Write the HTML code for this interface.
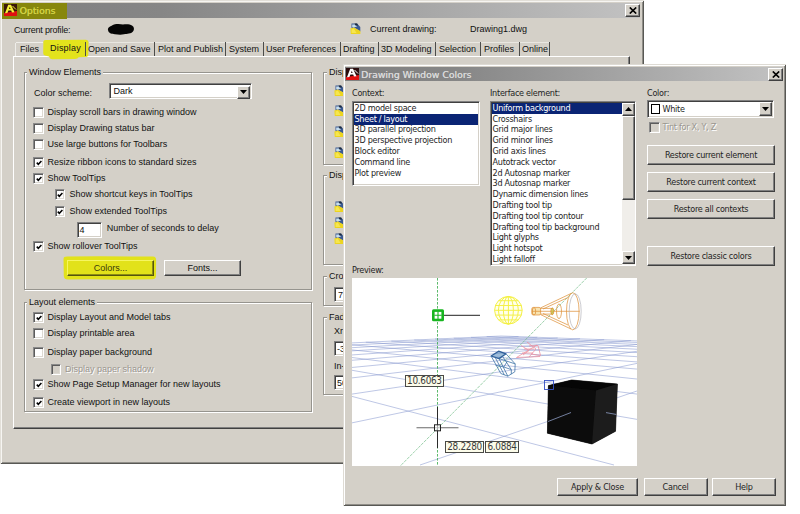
<!DOCTYPE html>
<html><head><meta charset="utf-8"><title>Options</title>
<style>
*{box-sizing:border-box;margin:0;padding:0}
html,body{width:800px;height:514px;background:#fff;overflow:hidden}
body{position:relative;font-family:"Liberation Sans",sans-serif;font-size:9px;color:#111;line-height:11px}
.a{position:absolute;white-space:nowrap}
.layer{position:absolute;left:0;top:0;width:800px;height:514px;overflow:hidden}
.win{position:absolute;background:#d4d0c8;box-shadow:inset 1px 1px 0 #dedbd4,inset -1px -1px 0 #585854,inset 2px 2px 0 #fff,inset -2px -2px 0 #908e88}
.tb{position:absolute;height:15px;background:linear-gradient(90deg,#808080 0%,#868686 25%,#c2c2c2 100%)}
.tt{position:absolute;font-family:"DejaVu Sans",sans-serif;font-weight:normal;font-size:9.3px;letter-spacing:0;color:#d8d8d8;text-shadow:0.2px 0 0 currentColor;white-space:nowrap;line-height:15px}
.xb{position:absolute;width:14px;height:12px;background:#d4d0c8;border:1px solid;border-color:#fff #404040 #404040 #fff;box-shadow:inset -1px -1px 0 #808080}
.grp{position:absolute;border:1px solid #96948e;box-shadow:1px 1px 0 #fff,inset 1px 1px 0 #fff}
.gl{position:absolute;background:#d4d0c8;padding:0 2px;white-space:nowrap}
.cb{position:absolute;width:10.5px;height:10.5px;background:#fff;border:1px solid;border-color:#8a8a8a #fff #fff #8a8a8a;box-shadow:inset 1px 1px 0 #5c5c5c,inset -1px -1px 0 #dcd9d2}
.cb.dis{background:#d4d0c8}
.btn{position:absolute;background:#d4d0c8;border:1px solid;border-color:#fff #404040 #404040 #fff;box-shadow:inset -1px -1px 0 #808080;text-align:center;white-space:nowrap}
.sunk{position:absolute;background:#fff;border:1px solid;border-color:#808080 #fff #fff #808080;box-shadow:inset 1px 1px 0 #404040,inset -1px -1px 0 #d4d0c8}
.t2{font-family:"DejaVu Sans Condensed","DejaVu Sans",sans-serif;font-size:9px;letter-spacing:-0.27px;color:#1e1e1e}
.li{position:absolute;height:11px;line-height:11px;padding-left:1px;white-space:nowrap}
.li.sel{background:#0a2474;color:#fff !important}
.tip{position:absolute;background:#fcfcea;border:1px solid #4a4a46;font-family:"DejaVu Sans Condensed","DejaVu Sans",sans-serif;font-size:9.9px;letter-spacing:-0.3px;line-height:10px;text-align:center;color:#3a3a3a;white-space:nowrap}
.dis{color:#9a968f;text-shadow:1px 1px 0 #fff}
</style></head><body>
<div class="layer" id="options">
<div class="win" style="left:0px;top:0px;width:644px;height:464px;box-shadow:inset 1px 1px 0 #e2dfd8,inset -1px -1px 0 #585854,inset 2px 2px 0 #f6f5f2,inset -2px -2px 0 #908e88"></div>
<div class="tb" style="left:2px;top:2.5px;width:638px;height:15px;"></div>
<div class="a" style="left:2px;top:2.5px;width:64.5px;height:16px;background:#87870d"></div>
<svg class="a" style="left:4px;top:4.3px" width="13" height="12" viewBox="0 0 13 12"><rect width="13" height="12" fill="#3a1808"/><path d="M0 9L13 7V12H0Z" fill="#e01010"/><path d="M1 9.2L4.2 0.8H7L10.5 8.2L8 8.6L7.2 6.6H4.4L3.4 9Z M5 5H6.6L5.8 2.8Z" fill="#f4f03a" fill-rule="evenodd"/><path d="M8.5 2L12 5.5" stroke="#f4f03a" stroke-width="1"/></svg>
<div class="tt" style="left:19.5px;top:2.8px;color:#d2d244">Options</div>
<div class="xb" style="left:625px;top:4px;width:14.5px;height:12.5px;"><svg class="a" style="left:2.5px;top:1.5px" width="8" height="7" viewBox="0 0 8 7"><path d="M0.8 0.5L7.2 6.5M7.2 0.5L0.8 6.5" stroke="#000" stroke-width="1.7"/></svg></div>
<div class="a" style="left:14px;top:24.5px;letter-spacing:-0.2px">Current profile:</div>
<svg class="a" style="left:106px;top:22px" width="30" height="14" viewBox="0 0 30 14"><path d="M2 8 C1.5 5.5,4 4.5,6 3.5 C9 1.6,14 2,17 2.5 C20 2,24 2,26 3.5 C28.5 5,28.3 8,27 9.5 C25 12,21 11.6,18 12.2 C15 13,12 12.6,9 12.2 C5 12,2.5 11,2 8Z" fill="#050505"/></svg>
<svg class="a" style="left:349.7px;top:22.6px" width="11" height="11.5" viewBox="0 0 11 11.5"><path d="M1.5 0.6H7L10.3 4V8.5L4 4.6L1.5 5.2Z" fill="#3c5a92"/><path d="M2.2 1.4H5.6L7 3.6L3.6 4.4L2.2 4.2Z" fill="#c6deee"/><path d="M4.6 0.6H7.2L8 2.4H5.4Z" fill="#1c2a3e"/><path d="M0.4 5.6L4 4.4L10.4 8V10.9H0.8Z" fill="#ecd420"/><path d="M1.5 6.5L3.8 5.6L6.5 10H1.6Z" fill="#f6e650"/></svg>
<div class="a" style="left:370px;top:24px;">Current drawing:</div>
<div class="a" style="left:470px;top:24px;">Drawing1.dwg</div>
<div class="a" style="left:13px;top:55.5px;width:617px;height:373.5px;border:1px solid;border-color:#fff #404040 #404040 #fff;box-shadow:inset -1px -1px 0 #808080"></div>
<svg class="a" style="left:40px;top:36px" width="52" height="26" viewBox="40 36 52 26"><path d="M43.4 41.2Q43.8 40 46 40L86 39.7Q88.6 39.9 88.5 42L88.3 55Q88.1 57 85 57.1L78.6 57.3Q78 59 75 59.1L52 59.3Q49.6 59.1 49 56.6L45 55.6Q43.2 55.1 43.2 53Z" fill="#e3e31c"/></svg>
<div class="a" style="left:15px;top:42.5px;width:1px;height:13px;background:#efeeea"></div>
<div class="a" style="left:16px;top:41.5px;width:27px;height:1px;background:#efeeea"></div>
<div class="a" style="left:88.5px;top:41.5px;width:460.5px;height:1px;background:#e9e7e1"></div>
<div class="a" style="left:20px;top:43.6px;">Files</div>
<div class="a" style="left:50px;top:43px;letter-spacing:0.2px">Display</div>
<div class="a" style="left:85px;top:42px;width:1px;height:13.5px;background:#4c4c4a"></div>
<div class="a" style="left:88px;top:43.6px;">Open and Save</div>
<div class="a" style="left:154px;top:42px;width:1px;height:13.5px;background:#4c4c4a"></div>
<div class="a" style="left:158px;top:43.6px;">Plot and Publish</div>
<div class="a" style="left:225px;top:42px;width:1px;height:13.5px;background:#4c4c4a"></div>
<div class="a" style="left:229px;top:43.6px;">System</div>
<div class="a" style="left:263px;top:42px;width:1px;height:13.5px;background:#4c4c4a"></div>
<div class="a" style="left:266px;top:43.6px;">User Preferences</div>
<div class="a" style="left:340px;top:42px;width:1px;height:13.5px;background:#4c4c4a"></div>
<div class="a" style="left:343px;top:43.6px;">Drafting</div>
<div class="a" style="left:378px;top:42px;width:1px;height:13.5px;background:#4c4c4a"></div>
<div class="a" style="left:381px;top:43.6px;">3D Modeling</div>
<div class="a" style="left:435px;top:42px;width:1px;height:13.5px;background:#4c4c4a"></div>
<div class="a" style="left:439px;top:43.6px;">Selection</div>
<div class="a" style="left:480px;top:42px;width:1px;height:13.5px;background:#4c4c4a"></div>
<div class="a" style="left:484px;top:43.6px;">Profiles</div>
<div class="a" style="left:519px;top:42px;width:1px;height:13.5px;background:#4c4c4a"></div>
<div class="a" style="left:522px;top:43.6px;">Online</div>
<div class="a" style="left:549px;top:42px;width:1px;height:13.5px;background:#4c4c4a"></div>
<div class="grp" style="left:24px;top:72px;width:288px;height:218px;"></div>
<div class="gl" style="left:27px;top:67px;">Window Elements</div>
<div class="a" style="left:34px;top:87.5px;">Color scheme:</div>
<div class="sunk" style="left:109px;top:83px;width:143px;height:16px;"><div class="a" style="left:3.5px;top:2px">Dark</div><div class="btn" style="right:1.5px;top:1.5px;width:12.5px;height:13px"><svg class="a" style="left:2px;top:3.5px" width="7" height="4" viewBox="0 0 7 4"><path d="M0 0H7L3.5 4Z" fill="#000"/></svg></div></div>
<div class="cb" style="left:33.2px;top:107px"></div>
<div class="a" style="left:47.4px;top:107.2px;">Display scroll bars in drawing window</div>
<div class="cb" style="left:33.2px;top:123px"></div>
<div class="a" style="left:47.4px;top:123.2px;">Display Drawing status bar</div>
<div class="cb" style="left:33.2px;top:139px"></div>
<div class="a" style="left:47.4px;top:139.2px;">Use large buttons for Toolbars</div>
<div class="cb" style="left:33.2px;top:157px"><svg class="a" style="left:1.6px;top:1.7px" width="6.2" height="6.2" viewBox="0 0 8 8"><path d="M1 3.4 L3 5.6 L7 1.4" stroke="#000" stroke-width="2" fill="none"/></svg></div>
<div class="a" style="left:47.4px;top:157.2px;">Resize ribbon icons to standard sizes</div>
<div class="cb" style="left:33.2px;top:173px"><svg class="a" style="left:1.6px;top:1.7px" width="6.2" height="6.2" viewBox="0 0 8 8"><path d="M1 3.4 L3 5.6 L7 1.4" stroke="#000" stroke-width="2" fill="none"/></svg></div>
<div class="a" style="left:47.4px;top:173.2px;">Show ToolTips</div>
<div class="cb" style="left:54.7px;top:189px"><svg class="a" style="left:1.6px;top:1.7px" width="6.2" height="6.2" viewBox="0 0 8 8"><path d="M1 3.4 L3 5.6 L7 1.4" stroke="#000" stroke-width="2" fill="none"/></svg></div>
<div class="a" style="left:69.4px;top:189.2px;">Show shortcut keys in ToolTips</div>
<div class="cb" style="left:54.7px;top:206px"><svg class="a" style="left:1.6px;top:1.7px" width="6.2" height="6.2" viewBox="0 0 8 8"><path d="M1 3.4 L3 5.6 L7 1.4" stroke="#000" stroke-width="2" fill="none"/></svg></div>
<div class="a" style="left:69.4px;top:206.2px;">Show extended ToolTips</div>
<div class="sunk" style="left:77px;top:222px;width:25px;height:15.5px;"><div class="a" style="left:1.5px;top:2px">4</div></div>
<div class="a" style="left:106.7px;top:223.2px;">Number of seconds to delay</div>
<div class="cb" style="left:33.2px;top:241px"><svg class="a" style="left:1.6px;top:1.7px" width="6.2" height="6.2" viewBox="0 0 8 8"><path d="M1 3.4 L3 5.6 L7 1.4" stroke="#000" stroke-width="2" fill="none"/></svg></div>
<div class="a" style="left:47.4px;top:241.2px;">Show rollover ToolTips</div>
<svg class="a" style="left:60px;top:252px" width="100" height="32" viewBox="60 252 100 32"><path d="M63.5 259Q63.6 256.6 67 256.6L100 256.2L130 256.6L153 256.4Q156.2 256.6 156.1 260L156 276Q155.8 279.4 152 279.3L120 279.7L90 279.3L68 279.6Q64 279.6 63.8 276Z" fill="#e2e21a"/></svg>
<div class="btn" style="left:67.4px;top:260px;width:86.4px;height:16.3px;line-height:14.5px;background:transparent;border-color:#f6f660 #55550c #55550c #f6f660;box-shadow:inset -1px -1px 0 #8c8c14;color:#38380c">Colors...</div>
<div class="btn" style="left:164px;top:260px;width:77px;height:16.3px;line-height:14.5px">Fonts...</div>
<div class="grp" style="left:24px;top:302px;width:288px;height:110px;"></div>
<div class="gl" style="left:27px;top:296.8px;">Layout elements</div>
<div class="cb" style="left:33.2px;top:312px"><svg class="a" style="left:1.6px;top:1.7px" width="6.2" height="6.2" viewBox="0 0 8 8"><path d="M1 3.4 L3 5.6 L7 1.4" stroke="#000" stroke-width="2" fill="none"/></svg></div>
<div class="a" style="left:47.4px;top:312.2px;">Display Layout and Model tabs</div>
<div class="cb" style="left:33.2px;top:328px"></div>
<div class="a" style="left:47.4px;top:328.2px;">Display printable area</div>
<div class="cb" style="left:33.2px;top:347px"></div>
<div class="a" style="left:47.4px;top:347.2px;">Display paper background</div>
<div class="cb dis" style="left:50.7px;top:364px"></div>
<div class="a dis" style="left:64.9px;top:364.2px;">Display paper shadow</div>
<div class="cb" style="left:33.2px;top:379px"><svg class="a" style="left:1.6px;top:1.7px" width="6.2" height="6.2" viewBox="0 0 8 8"><path d="M1 3.4 L3 5.6 L7 1.4" stroke="#000" stroke-width="2" fill="none"/></svg></div>
<div class="a" style="left:47.4px;top:379.2px;">Show Page Setup Manager for new layouts</div>
<div class="cb" style="left:33.2px;top:397px"><svg class="a" style="left:1.6px;top:1.7px" width="6.2" height="6.2" viewBox="0 0 8 8"><path d="M1 3.4 L3 5.6 L7 1.4" stroke="#000" stroke-width="2" fill="none"/></svg></div>
<div class="a" style="left:47.4px;top:397.2px;">Create viewport in new layouts</div>
<div class="grp" style="left:323px;top:72px;width:300px;height:93px;"></div>
<div class="gl" style="left:327px;top:67px;">Display resolution</div>
<svg class="a" style="left:333.7px;top:84.6px" width="11" height="11.5" viewBox="0 0 11 11.5"><path d="M1.5 0.6H7L10.3 4V8.5L4 4.6L1.5 5.2Z" fill="#3c5a92"/><path d="M2.2 1.4H5.6L7 3.6L3.6 4.4L2.2 4.2Z" fill="#c6deee"/><path d="M4.6 0.6H7.2L8 2.4H5.4Z" fill="#1c2a3e"/><path d="M0.4 5.6L4 4.4L10.4 8V10.9H0.8Z" fill="#ecd420"/><path d="M1.5 6.5L3.8 5.6L6.5 10H1.6Z" fill="#f6e650"/></svg>
<svg class="a" style="left:333.7px;top:104.6px" width="11" height="11.5" viewBox="0 0 11 11.5"><path d="M1.5 0.6H7L10.3 4V8.5L4 4.6L1.5 5.2Z" fill="#3c5a92"/><path d="M2.2 1.4H5.6L7 3.6L3.6 4.4L2.2 4.2Z" fill="#c6deee"/><path d="M4.6 0.6H7.2L8 2.4H5.4Z" fill="#1c2a3e"/><path d="M0.4 5.6L4 4.4L10.4 8V10.9H0.8Z" fill="#ecd420"/><path d="M1.5 6.5L3.8 5.6L6.5 10H1.6Z" fill="#f6e650"/></svg>
<svg class="a" style="left:333.7px;top:125.6px" width="11" height="11.5" viewBox="0 0 11 11.5"><path d="M1.5 0.6H7L10.3 4V8.5L4 4.6L1.5 5.2Z" fill="#3c5a92"/><path d="M2.2 1.4H5.6L7 3.6L3.6 4.4L2.2 4.2Z" fill="#c6deee"/><path d="M4.6 0.6H7.2L8 2.4H5.4Z" fill="#1c2a3e"/><path d="M0.4 5.6L4 4.4L10.4 8V10.9H0.8Z" fill="#ecd420"/><path d="M1.5 6.5L3.8 5.6L6.5 10H1.6Z" fill="#f6e650"/></svg>
<svg class="a" style="left:333.7px;top:146.6px" width="11" height="11.5" viewBox="0 0 11 11.5"><path d="M1.5 0.6H7L10.3 4V8.5L4 4.6L1.5 5.2Z" fill="#3c5a92"/><path d="M2.2 1.4H5.6L7 3.6L3.6 4.4L2.2 4.2Z" fill="#c6deee"/><path d="M4.6 0.6H7.2L8 2.4H5.4Z" fill="#1c2a3e"/><path d="M0.4 5.6L4 4.4L10.4 8V10.9H0.8Z" fill="#ecd420"/><path d="M1.5 6.5L3.8 5.6L6.5 10H1.6Z" fill="#f6e650"/></svg>
<div class="grp" style="left:323px;top:175px;width:300px;height:89.5px;"></div>
<div class="gl" style="left:327px;top:169.5px;">Display performance</div>
<svg class="a" style="left:333.7px;top:201.1px" width="11" height="11.5" viewBox="0 0 11 11.5"><path d="M1.5 0.6H7L10.3 4V8.5L4 4.6L1.5 5.2Z" fill="#3c5a92"/><path d="M2.2 1.4H5.6L7 3.6L3.6 4.4L2.2 4.2Z" fill="#c6deee"/><path d="M4.6 0.6H7.2L8 2.4H5.4Z" fill="#1c2a3e"/><path d="M0.4 5.6L4 4.4L10.4 8V10.9H0.8Z" fill="#ecd420"/><path d="M1.5 6.5L3.8 5.6L6.5 10H1.6Z" fill="#f6e650"/></svg>
<svg class="a" style="left:333.7px;top:217.1px" width="11" height="11.5" viewBox="0 0 11 11.5"><path d="M1.5 0.6H7L10.3 4V8.5L4 4.6L1.5 5.2Z" fill="#3c5a92"/><path d="M2.2 1.4H5.6L7 3.6L3.6 4.4L2.2 4.2Z" fill="#c6deee"/><path d="M4.6 0.6H7.2L8 2.4H5.4Z" fill="#1c2a3e"/><path d="M0.4 5.6L4 4.4L10.4 8V10.9H0.8Z" fill="#ecd420"/><path d="M1.5 6.5L3.8 5.6L6.5 10H1.6Z" fill="#f6e650"/></svg>
<svg class="a" style="left:333.7px;top:232.6px" width="11" height="11.5" viewBox="0 0 11 11.5"><path d="M1.5 0.6H7L10.3 4V8.5L4 4.6L1.5 5.2Z" fill="#3c5a92"/><path d="M2.2 1.4H5.6L7 3.6L3.6 4.4L2.2 4.2Z" fill="#c6deee"/><path d="M4.6 0.6H7.2L8 2.4H5.4Z" fill="#1c2a3e"/><path d="M0.4 5.6L4 4.4L10.4 8V10.9H0.8Z" fill="#ecd420"/><path d="M1.5 6.5L3.8 5.6L6.5 10H1.6Z" fill="#f6e650"/></svg>
<div class="grp" style="left:323px;top:276px;width:300px;height:29.5px;"></div>
<div class="gl" style="left:327px;top:270.5px;">Crosshair size</div>
<div class="sunk" style="left:334px;top:287px;width:30px;height:15px;"><div class="a" style="left:3px;top:2px">7</div></div>
<div class="grp" style="left:323px;top:317px;width:300px;height:77.5px;"></div>
<div class="gl" style="left:327px;top:311.5px;">Fade control</div>
<div class="a" style="left:334px;top:325.5px;">Xref display</div>
<div class="sunk" style="left:334px;top:340.5px;width:30px;height:15px;"><div class="a" style="left:2px;top:2px">-3</div></div>
<div class="a" style="left:334px;top:360.5px;">In-place edit and annotative representations</div>
<div class="sunk" style="left:334px;top:375px;width:30px;height:14.5px;"><div class="a" style="left:2px;top:2px">50</div></div>
</div>
<div class="layer" id="colors">
<div class="win" style="left:343px;top:64px;width:443px;height:442px;"></div>
<div class="tb" style="left:344.5px;top:66.5px;width:438.5px;height:14.5px;"></div>
<svg class="a" style="left:346px;top:68.3px" width="13" height="12" viewBox="0 0 13 12"><rect width="13" height="12" fill="#2a0c0c"/><path d="M0 9L13 7V12H0Z" fill="#e01010"/><path d="M1 9.2L4.2 0.8H7L10.5 8.2L8 8.6L7.2 6.6H4.4L3.4 9Z M5 5H6.6L5.8 2.8Z" fill="#fff" fill-rule="evenodd"/><path d="M8.5 2L12 5.5" stroke="#fff" stroke-width="1"/></svg>
<div class="tt" style="left:361px;top:66.5px;">Drawing Window Colors</div>
<div class="xb" style="left:768px;top:68px;width:14.5px;height:12.5px;"><svg class="a" style="left:2.5px;top:1.5px" width="8" height="7" viewBox="0 0 8 7"><path d="M0.8 0.5L7.2 6.5M7.2 0.5L0.8 6.5" stroke="#000" stroke-width="1.7"/></svg></div>
<div class="a t2" style="left:352px;top:88px;">Context:</div>
<div class="a t2" style="left:490px;top:88px;">Interface element:</div>
<div class="a t2" style="left:647px;top:88px;">Color:</div>
<div class="sunk" style="left:352px;top:100.5px;width:127.5px;height:85.5px;"><div class="li t2" style="left:0.5px;right:1px;top:1.2px">2D model space</div><div class="li t2 sel" style="left:0.5px;right:1px;top:12.0px">Sheet / layout</div><div class="li t2" style="left:0.5px;right:1px;top:22.8px">3D parallel projection</div><div class="li t2" style="left:0.5px;right:1px;top:33.6px">3D perspective projection</div><div class="li t2" style="left:0.5px;right:1px;top:44.4px">Block editor</div><div class="li t2" style="left:0.5px;right:1px;top:55.2px">Command line</div><div class="li t2" style="left:0.5px;right:1px;top:66.0px">Plot preview</div></div>
<div class="sunk" style="left:490px;top:100.5px;width:146px;height:165.5px;"><div class="li t2 sel" style="left:0.5px;right:13.5px;top:1.2px">Uniform background</div><div class="li t2" style="left:0.5px;right:13.5px;top:12.0px">Crosshairs</div><div class="li t2" style="left:0.5px;right:13.5px;top:22.8px">Grid major lines</div><div class="li t2" style="left:0.5px;right:13.5px;top:33.6px">Grid minor lines</div><div class="li t2" style="left:0.5px;right:13.5px;top:44.4px">Grid axis lines</div><div class="li t2" style="left:0.5px;right:13.5px;top:55.2px">Autotrack vector</div><div class="li t2" style="left:0.5px;right:13.5px;top:66.0px">2d Autosnap marker</div><div class="li t2" style="left:0.5px;right:13.5px;top:76.8px">3d Autosnap marker</div><div class="li t2" style="left:0.5px;right:13.5px;top:87.6px">Dynamic dimension lines</div><div class="li t2" style="left:0.5px;right:13.5px;top:98.4px">Drafting tool tip</div><div class="li t2" style="left:0.5px;right:13.5px;top:109.2px">Drafting tool tip contour</div><div class="li t2" style="left:0.5px;right:13.5px;top:120.0px">Drafting tool tip background</div><div class="li t2" style="left:0.5px;right:13.5px;top:130.8px">Light glyphs</div><div class="li t2" style="left:0.5px;right:13.5px;top:141.6px">Light hotspot</div><div class="li t2" style="left:0.5px;right:13.5px;top:152.4px">Light falloff</div><div class="a" style="right:0.5px;top:1px;width:13px;height:162px;background:#f0eeea"></div><div class="btn" style="right:0.5px;top:1px;width:13px;height:13.5px"><svg class="a" style="left:2px;top:3px" width="7" height="4" viewBox="0 0 7 4"><path d="M0 4H7L3.5 0Z" fill="#000"/></svg></div><div class="btn" style="right:0.5px;top:14.5px;width:13px;height:84px"></div><div class="btn" style="right:0.5px;bottom:1px;width:13px;height:13.5px"><svg class="a" style="left:2px;top:4px" width="7" height="4" viewBox="0 0 7 4"><path d="M0 0H7L3.5 4Z" fill="#000"/></svg></div></div>
<div class="sunk" style="left:647px;top:100px;width:127px;height:18px;"><div class="a" style="left:3px;top:3px;width:9px;height:10px;border:1px solid #000;background:#fff"></div><div class="a t2" style="left:14.5px;top:3.3px">White</div><div class="btn" style="right:1px;top:1px;width:13px;height:14px"><svg class="a" style="left:2px;top:4px" width="7" height="4" viewBox="0 0 7 4"><path d="M0 0H7L3.5 4Z" fill="#000"/></svg></div></div>
<div class="cb dis" style="left:649px;top:122px"></div>
<div class="a t2 dis" style="left:662.5px;top:122px;">Tint for X, Y, Z</div>
<div class="btn t2" style="left:647px;top:144.5px;width:128px;height:20.5px;line-height:18.5px">Restore current element</div>
<div class="btn t2" style="left:647px;top:172px;width:128px;height:20px;line-height:18px">Restore current context</div>
<div class="btn t2" style="left:647px;top:199px;width:128px;height:20px;line-height:18px">Restore all contexts</div>
<div class="btn t2" style="left:647px;top:245.5px;width:128px;height:20.5px;line-height:18.5px">Restore classic colors</div>
<div class="a t2" style="left:352px;top:265px;">Preview:</div>
<div class="a" id="pv" style="left:352px;top:278px;width:285px;height:188px;background:#fff;overflow:hidden">
<svg class="a" style="left:0;top:0" width="285" height="188" viewBox="0 0 285 188">
<path d="M149.2 58.0L-2632.0 187.0M166.5 58.6L-2362.0 187.0M185.3 59.3L-2092.0 187.0M205.7 60.0L-1822.0 187.0M227.9 60.8L-1552.0 187.0M252.1 61.7L-1282.0 187.0M278.8 62.6L-1012.0 187.0M308.2 63.7L-742.0 187.0M340.7 64.9L-472.0 187.0M377.0 66.2L-202.0 187.0M417.8 67.7L68.0 187.0M463.8 69.3L338.0 187.0M-173.8 72.9L262.0 187.0M-125.4 70.7L550.0 187.0M-83.5 68.8L838.0 187.0M-47.0 67.1L1126.0 187.0M-14.8 65.6L1414.0 187.0M13.8 64.2L1702.0 187.0M39.3 63.1L1990.0 187.0M62.2 62.0L2278.0 187.0M83.0 61.0L2566.0 187.0M101.8 60.2L2854.0 187.0M119.0 59.4L3142.0 187.0M134.7 58.6L3430.0 187.0M149.2 58.0L3718.0 187.0" stroke="#8696ce" stroke-width="0.6" fill="none" opacity="0.9"/>
<path d="M85.5 0V188" stroke="#34a846" stroke-width="0.8" stroke-dasharray="2.6 1.4" fill="none"/>
<path d="M234.7 0L48.3 188" stroke="#58b070" stroke-width="0.6" stroke-dasharray="3 1" fill="none"/>
<path d="M92 37.3H128" stroke="#222" stroke-width="1"/>
<rect x="80" y="31.3" width="12" height="12" rx="1.5" fill="#17b51f"/>
<rect x="82.6" y="33.9" width="6.8" height="6.8" fill="#fff"/>
<path d="M86 33.5V41M82.3 37.3H89.7" stroke="#17b51f" stroke-width="1.1"/>
<g stroke="#f3ef30" stroke-width="0.95" fill="none" opacity="0.92"><circle cx="156.4" cy="32.3" r="13.8" fill="#ffffdc" fill-opacity="0.6"/><ellipse cx="156.4" cy="32.3" rx="5" ry="13.8"/><ellipse cx="156.4" cy="32.3" rx="10" ry="13.8"/><path d="M156.4 18.499999999999996V46.099999999999994M142.6 32.3H170.20000000000002"/><path d="M146.5 22.699999999999996H166.3"/><path d="M143.5 27.499999999999996H169.3"/><path d="M143.5 37.099999999999994H169.3"/><path d="M146.5 41.9H166.3"/></g>
<g stroke="#dc8c30" stroke-width="0.7" fill="none"><rect x="179.8" y="29.4" width="8.8" height="7.6" rx="1.5" fill="#f6d890" fill-opacity="0.7"/><ellipse cx="182" cy="33.3" rx="1.7" ry="3.7"/><path d="M188.6 30.4H201M188.6 36.1H201"/><path d="M188.6 29.9L219 15.5M188.6 36.6L219 51M191 31L216 19.5M191 35.5L216 47M180 33.3H227.7"/><ellipse cx="220.8" cy="33.3" rx="6.3" ry="18.6"/><ellipse cx="223.2" cy="33.3" rx="6" ry="17.6" stroke="#a8a8b0" stroke-width="0.6"/><ellipse cx="207" cy="33.3" rx="2.5" ry="7.3"/><ellipse cx="200.3" cy="33.3" rx="1.5" ry="3.4" fill="#c8c040" fill-opacity="0.8"/></g>
<g stroke="#ee8e9c" stroke-width="0.75" fill="none"><path d="M164.5 79.5L185 67M164.5 79.5L188 78.5M169 67.5L177 72.5L171 77M175 64L184 71L177 79M177 68L186 67.5L188.5 77.5L179 76M172 71H182M170 75H181"/></g>
<g stroke="#3d72a6" stroke-width="0.8" fill="none" stroke-linejoin="round"><path d="M139.1 78.0L146.6 73.2L154.0 75.8L147.0 80.6Z" fill="#4f86bc" fill-opacity="0.55" stroke-width="1.3" stroke="#2f5f98"/><path d="M139.1 78.0L148.8 95.5L155.8 98.2L147.0 80.6M154.0 75.8L163.2 85.9L162.8 93.8L155.8 98.2M143.1 79.3L152.3 96.8M150.5 78.3L159.3 91.6L159.3 96.1M143.5 87.2L151.8 89.0L159.3 91.6M147.0 80.6L155.3 83.3L163.2 85.9M155.3 83.3L151.8 89.0"/></g>
<polygon points="196.4,107.6 219.7,102 265.4,106 263.5,153.3 240,166 195.4,155.2" fill="#0c0c0c" stroke="#0c0c0c" stroke-width="0.6"/>
<polygon points="196.4,107.6 219.7,102 265.4,106 244,112.4" fill="#050505"/>
<polygon points="196.4,107.6 244,112.4 240,166 195.4,155.2" fill="#0c0c0c"/>
<polygon points="244,112.4 265.4,106 263.5,153.3 240,166" fill="#1c1c1c"/>
<path d="M196 143.5L219 134.5M254 134.6L264 136.4" stroke="#9fb0dc" stroke-width="0.7"/>
<rect x="192.5" y="102.5" width="9" height="9" fill="none" stroke="#3450c4" stroke-width="0.9"/>
<path d="M64.5 149.8H106.5" stroke="#6a6a6a" stroke-width="1.1"/><path d="M85.5 129V170" stroke="#2a2a2a" stroke-width="1"/>
<rect x="82.5" y="146.8" width="6" height="6" fill="#fff" fill-opacity="0.6" stroke="#222" stroke-width="1"/>
</svg>
<div class="tip" style="left:53px;top:97.2px;width:38.8px;height:12.2px">10.6063</div>
<div class="tip" style="left:93.3px;top:162.6px;width:38.5px;height:12.7px">28.2280</div>
<div class="tip" style="left:133.4px;top:162.6px;width:33.4px;height:12.7px">6.0884</div>
</div>
<div class="btn t2" style="left:557px;top:478px;width:81px;height:17.5px;line-height:16px">Apply &amp; Close</div>
<div class="btn t2" style="left:643.5px;top:478px;width:64px;height:17.5px;line-height:16px">Cancel</div>
<div class="btn t2" style="left:712px;top:478px;width:64px;height:17.5px;line-height:16px">Help</div>
</div>
</body></html>
